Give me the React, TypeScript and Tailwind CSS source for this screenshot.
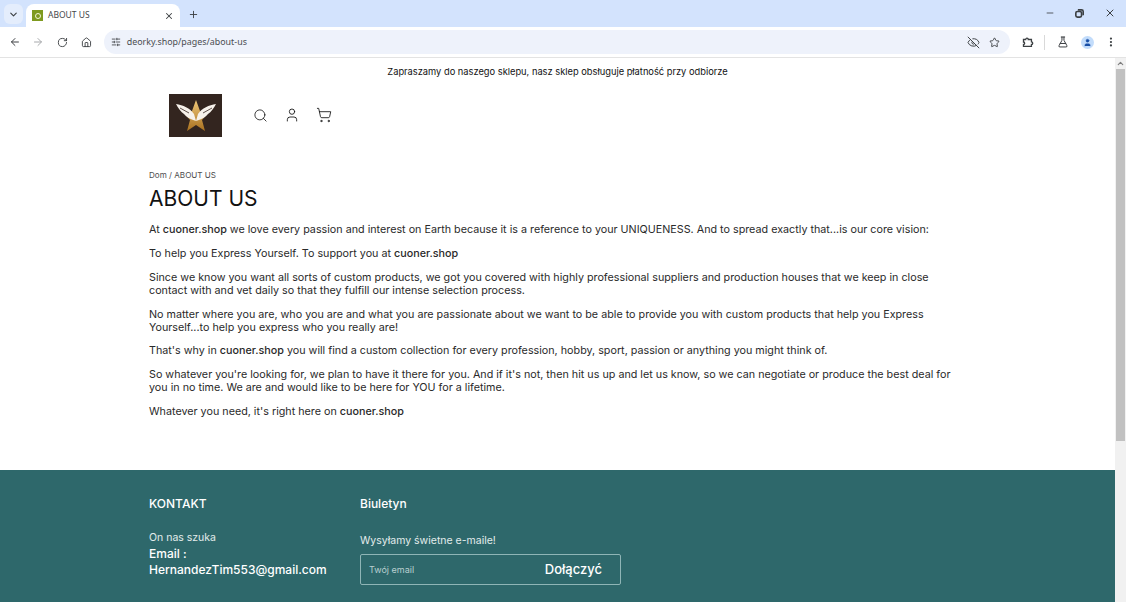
import { ChevronDown, X, Plus, ArrowLeft, ArrowRight, RotateCw, Home, SlidersHorizontal, EyeOff, Star, FlaskConical, User, MoreVertical, Minus, Search, ShoppingCart, ChevronUp } from "lucide-react";

const font = "font-['Inter','Noto_Sans',sans-serif]";
const uiFont = "font-['Noto_Sans',sans-serif]";

function Logo() {
  return (
    <div className="w-[53px] h-[43px] bg-[#33251f] flex items-center justify-center">
      <svg width="44" height="36" viewBox="0 0 44 36">
        <defs>
          <linearGradient id="star" x1="0" y1="0" x2="0" y2="1">
            <stop offset="0" stopColor="#f0c878" />
            <stop offset="1" stopColor="#a8701f" />
          </linearGradient>
        </defs>
        <path d="M22 3 L26 14 L34 16 L28 23 L31 34 L22 28 L13 34 L16 23 L10 16 L18 14Z" fill="url(#star)" />
        <path d="M2 7 C9 8 16 11 20 17 L22 24 C16 22 12 20 10 17 C7 15 4 11 2 7Z" fill="#f6f1ea" />
        <path d="M42 7 C35 8 28 11 24 17 L22 24 C28 22 32 20 34 17 C37 15 40 11 42 7Z" fill="#f6f1ea" />
        <path d="M6 11 L15 16 M38 11 L29 16" stroke="#33251f" strokeWidth="0.8" />
      </svg>
    </div>
  );
}

function Browser() {
  return (
    <div className="shrink-0 text-[#3c4043]">
      <div className="h-[27px] bg-[#d3e3fd] flex items-end pl-[4px] relative">
        <div className="w-[19px] h-[20px] mb-[3px] mr-[3px] rounded-md bg-[#e4edfc] flex items-center justify-center">
          <ChevronDown size={11} strokeWidth={2.5} />
        </div>
        <div className="w-[154px] h-[23px] bg-white rounded-t-lg flex items-center pl-[6px] pr-[6px]">
          <div className="w-[11px] h-[11px] bg-[#7f9a1f] flex items-center justify-center">
            <div className="w-[6px] h-[6px] rounded-full border border-[#f3f5d8]" />
          </div>
          <span className={`ml-[5px] text-[8.5px] text-[#45474a] flex-1 ${uiFont}`}>ABOUT US</span>
          <X size={10} strokeWidth={2.5} />
        </div>
        <Plus size={11} strokeWidth={2} className="ml-[8px] mb-[7px]" />
        <div className="absolute right-[10px] top-[7px] flex items-center gap-[20px]">
          <Minus size={10} />
          <svg width="9" height="9" viewBox="0 0 11 11" fill="none" stroke="currentColor" strokeWidth="2">
            <rect x="1" y="3" width="7" height="7" rx="2" />
            <path d="M3.5 1h4.5a2 2 0 0 1 2 2v4.5" />
          </svg>
          <X size={12} />
        </div>
      </div>
      <div className="h-[31px] bg-white flex items-center border-b border-[#e3e3e3] pl-[9px] pr-[9px]">
        <ArrowLeft size={12} strokeWidth={2} />
        <ArrowRight size={12} strokeWidth={2} className="ml-[11px] text-[#a6a8ab]" />
        <RotateCw size={11} strokeWidth={2} className="ml-[13px]" />
        <Home size={11} strokeWidth={2} className="ml-[13px]" />
        <div className="ml-[12px] w-[913px] h-[24px] rounded-full bg-[#eef2fb] flex items-center pl-[7px] pr-[10px]">
          <SlidersHorizontal size={10} strokeWidth={2} />
          <span className={`ml-[6px] text-[8.9px] text-[#4a4d51] flex-1 ${uiFont}`}>deorky.shop/pages/about-us</span>
          <EyeOff size={13} strokeWidth={1.8} />
          <Star size={11} strokeWidth={2} className="ml-[9px]" />
        </div>
        <svg width="12" height="12" viewBox="0 0 12 12" fill="none" stroke="currentColor" strokeWidth="1.3" className="ml-[12px]">
          <path d="M1.5 3.5h2.2a1.3 1.3 0 1 1 2.6 0h3.2v2.4a1.3 1.3 0 1 1 0 2.6v2h-8V8.4a1.2 1.2 0 0 0 0-2.4z" />
        </svg>
        <div className="ml-[10px] h-[15px] w-px bg-[#d9d9d9]" />
        <FlaskConical size={12} strokeWidth={2} className="ml-[12px]" />
        <div className="ml-[12px] w-[13px] h-[13px] rounded-full bg-[#c2dcfb] flex items-center justify-center text-[#174ea6]">
          <User size={9} fill="currentColor" strokeWidth={1} />
        </div>
        <MoreVertical size={12} strokeWidth={2.5} className="ml-[11px]" />
      </div>
    </div>
  );
}

function Scrollbar() {
  return (
    <div className="w-[11px] shrink-0 bg-[#f1f1f1] flex flex-col items-center">
      <ChevronUp size={9} strokeWidth={3} className="text-[#7d7d7d] mt-[1px]" />
      <div className="w-[9px] h-[372px] mt-[1px] bg-[#c1c1c1]" />
    </div>
  );
}

function Paragraph({ children }: { children: React.ReactNode }) {
  return <p className="mb-[10.9px] text-[10.75px] leading-[13px] text-[#2a2a2a]">{children}</p>;
}

export default function App() {
  return (
    <div className={`w-[1126px] h-[602px] flex flex-col overflow-hidden bg-white ${font}`}>
      <Browser />
      <div className="flex flex-1 min-h-0">
        <div className="flex-1 min-w-0 flex flex-col overflow-hidden text-[#121212]">
          <div className="h-[27px] shrink-0 flex items-center justify-center text-[9.3px]">
            Zapraszamy do naszego sklepu, nasz sklep obsługuje płatność przy odbiorze
          </div>
          <div className="h-[60px] shrink-0 flex items-center pl-[169px]">
            <Logo />
            <Search size={15} strokeWidth={1.3} className="ml-[31px]" />
            <User size={16} strokeWidth={1.3} className="ml-[16px]" />
            <ShoppingCart size={16} strokeWidth={1.3} className="ml-[16px]" />
          </div>
          <div className="pl-[149px] pr-[160px] pt-[24px]">
            <div className="text-[8.1px] leading-[12px] text-[#4d4d4d]">Dom / ABOUT US</div>
            <h1 className="mt-[4px] text-[21px] leading-[28px] mb-[9.9px] font-normal">ABOUT US</h1>
            <Paragraph>
              At <b className="font-medium">cuoner.shop</b> we love every passion and interest on Earth because it is a reference to your UNIQUENESS. And to spread exactly that...is our core vision:
            </Paragraph>
            <Paragraph>
              To help you Express Yourself. To support you at <b className="font-medium">cuoner.shop</b>
            </Paragraph>
            <Paragraph>
              Since we know you want all sorts of custom products, we got you covered with highly professional suppliers and production houses that we keep in close contact with and vet daily so that they fulfill our intense selection process.
            </Paragraph>
            <Paragraph>
              No matter where you are, who you are and what you are passionate about we want to be able to provide you with custom products that help you Express Yourself...to help you express who you really are!
            </Paragraph>
            <Paragraph>
              That's why in <b className="font-medium">cuoner.shop</b> you will find a custom collection for every profession, hobby, sport, passion or anything you might think of.
            </Paragraph>
            <Paragraph>
              So whatever you're looking for, we plan to have it there for you. And if it's not, then hit us up and let us know, so we can negotiate or produce the best deal for you in no time. We are and would like to be here for YOU for a lifetime.
            </Paragraph>
            <Paragraph>
              Whatever you need, it's right here on <b className="font-medium">cuoner.shop</b>
            </Paragraph>
          </div>
          <footer className="mt-auto h-[132px] shrink-0 bg-[#2e686b] text-white flex pl-[149px] pt-[26px]">
            <div className="w-[211px]">
              <div className="text-[12px] leading-[16px] font-medium">KONTAKT</div>
              <div className="mt-[18px] text-[10.5px] leading-[16px] text-[#e3ecec]">On nas szuka</div>
              <div className="text-[12px] leading-[15.5px] font-medium">Email :<br />HernandezTim553@gmail.com</div>
            </div>
            <div className="w-[261px]">
              <div className="text-[12px] leading-[16px] font-medium">Biuletyn</div>
              <div className="mt-[21px] text-[10.5px] leading-[16px] text-[#e3ecec]">Wysyłamy świetne e-maile!</div>
              <div className="mt-[5px] h-[31px] rounded-[2px] border border-[#8fb5b6] flex items-center justify-between pl-[8px] pr-[18px]">
                <span className="text-[9px] text-[#b9d0d0]">Twój email</span>
                <span className="text-[13px] font-medium">Dołączyć</span>
              </div>
            </div>
          </footer>
        </div>
        <Scrollbar />
      </div>
    </div>
  );
}
